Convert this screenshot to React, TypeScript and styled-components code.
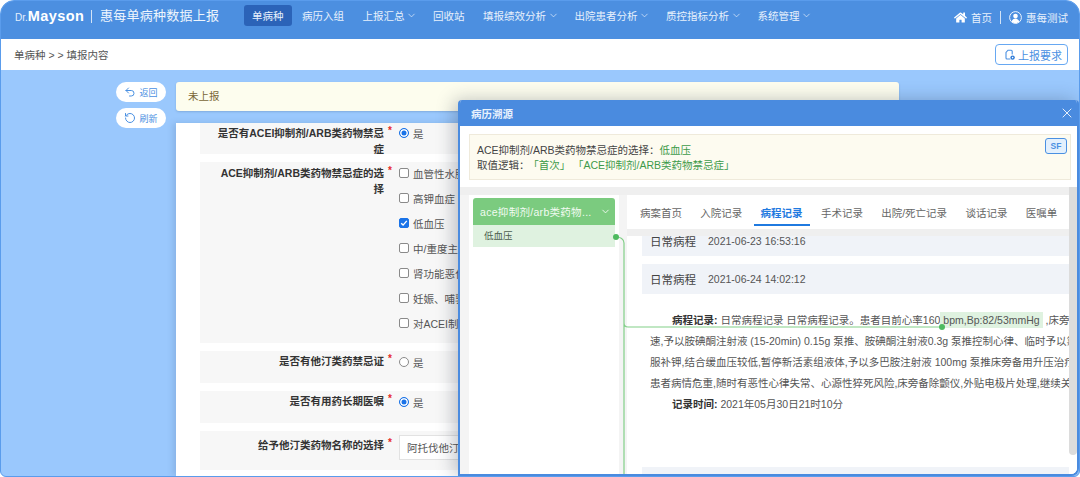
import styled, { createGlobalStyle } from "styled-components";
import { ChevronDown, RotateCcw, Undo2, X } from "lucide-react";
import { FaHome } from "react-icons/fa";

const sans = `"Liberation Sans", "Noto Sans CJK SC", sans-serif`;

const GlobalStyle = createGlobalStyle`
  html, body {
    margin: 0;
    padding: 0;
    background: #fff;
  }
  * {
    box-sizing: border-box;
  }
  body {
    font-family: ${sans};
    color: #333;
  }
`;

const Frame = styled.div`
  position: relative;
  display: flex;
  flex-direction: column;
  width: 1080px;
  height: 477px;
  overflow: hidden;
  border: 1px solid #5a9cec;
  border-radius: 14px 14px 6px 6px;
  background: #9ac8fd;
`;

const TopBar = styled.header`
  display: flex;
  align-items: flex-start;
  height: 38px;
  flex: none;
  padding: 4px 11px 0 14px;
  background: #4c8fe0;
  color: #fff;
`;

const Logo = styled.div`
  display: flex;
  align-items: baseline;
  height: 22px;
  line-height: 22px;
  width: 76px;
  font-size: 10px;
  font-weight: 300;
  color: #e6f0fc;
`;

const LogoName = styled.span`
  font-size: 14.5px;
  font-weight: 700;
  letter-spacing: 0.4px;
  color: #fff;
`;

const Divider = styled.span<{ $h: number }>`
  flex: none;
  width: 1px;
  height: ${(p) => p.$h}px;
  background: rgba(255, 255, 255, 0.75);
`;

const TitleDivider = styled(Divider)`
  margin: 5px 8px 0 0;
`;

const AppTitle = styled.div`
  width: 120px;
  line-height: 22px;
  font-size: 13px;
  letter-spacing: 0.25px;
  color: #eef5fd;
  white-space: nowrap;
`;

const Nav = styled.nav`
  display: flex;
  gap: 2.5px;
  margin-left: 24px;
`;

const NavItem = styled.div<{ $active?: boolean }>`
  display: flex;
  align-items: center;
  height: 21px;
  padding: 0 8px;
  border-radius: 3px;
  font-size: 10.5px;
  white-space: nowrap;
  color: #e8f1fc;
  background: ${(p) => (p.$active ? "#2b63b8" : "transparent")};
`;

const NavChevron = styled(ChevronDown)`
  width: 11px;
  height: 11px;
  margin-left: 1.5px;
  margin-right: -2.5px;
  stroke-width: 1.5;
`;

const TopRight = styled.div`
  display: flex;
  align-items: center;
  height: 24px;
  margin-left: auto;
  font-size: 10.5px;
  color: #e8f1fc;
`;

const TopRightLink = styled.span`
  display: flex;
  align-items: center;
  gap: 4px;
  white-space: nowrap;
`;

const TopDivider = styled(Divider)`
  margin: 0 8px;
`;

const Breadcrumb = styled.div`
  display: flex;
  align-items: center;
  justify-content: space-between;
  flex: none;
  height: 31px;
  padding: 0 11px 0 13px;
  background: #fff;
  font-size: 10.5px;
  color: #555;
`;

const RequireButton = styled.div`
  display: flex;
  align-items: center;
  gap: 2px;
  width: 73px;
  height: 21px;
  padding-left: 8px;
  border: 1px solid #67a8f2;
  border-radius: 4px;
  font-size: 11px;
  color: #4a90e2;
  white-space: nowrap;
`;

const Content = styled.main`
  display: flex;
  flex: 1;
  min-height: 0;
  padding: 12px 0 0 115px;
`;

const SideActions = styled.div`
  display: flex;
  flex-direction: column;
  gap: 6px;
  width: 60px;
  flex: none;
`;

const PillButton = styled.div`
  display: flex;
  align-items: center;
  justify-content: center;
  gap: 3px;
  width: 50px;
  height: 20px;
  border-radius: 10px;
  background: #fff;
  font-size: 9px;
  color: #4a90e2;
`;

const MainColumn = styled.div`
  display: flex;
  flex-direction: column;
  width: 723px;
  min-height: 0;
`;

const StatusBar = styled.div`
  flex: none;
  height: 29px;
  margin-bottom: 12px;
  padding: 0 12px;
  line-height: 28px;
  border-radius: 3px;
  background: #fdfdee;
  box-shadow: 0 1px 2px rgba(60, 90, 130, 0.25);
  font-size: 10.5px;
  color: #7a6636;
`;

const FormPanel = styled.section`
  display: flex;
  flex-direction: column;
  gap: 8px;
  flex: 1;
  padding-left: 24px;
  padding-right: 9px;
  background: #fff;
  box-shadow: -3px 0 6px rgba(60, 90, 130, 0.18);
`;

const FormRow = styled.div<{ $h: number }>`
  display: flex;
  flex: none;
  height: ${(p) => p.$h}px;
  background: #f7f7f7;
`;

const FieldLabel = styled.div<{ $top: number }>`
  flex: none;
  width: 184px;
  padding: ${(p) => p.$top}px 0 0 12px;
  text-align: right;
  font-size: 10.5px;
  font-weight: 700;
  line-height: 15.5px;
  color: #333;
`;

const Required = styled.span<{ $top: number }>`
  flex: none;
  width: 15px;
  padding: ${(p) => p.$top}px 0 0 4px;
  font-size: 10px;
  font-weight: 700;
  line-height: 12px;
  color: #e62a2a;
`;

const OptionList = styled.div<{ $top: number }>`
  display: flex;
  flex-direction: column;
  gap: 9px;
  padding-top: ${(p) => p.$top}px;
`;

const Option = styled.div`
  display: flex;
  align-items: center;
  gap: 4px;
  height: 16px;
  font-size: 10.5px;
  color: #555;
  white-space: nowrap;
`;

const RadioMark = styled.span<{ $on?: boolean }>`
  flex: none;
  width: 10px;
  height: 10px;
  border-radius: 50%;
  background: #fff;
  border: 1px solid ${(p) => (p.$on ? "#1a73e8" : "#8a8a8a")};
  box-shadow: ${(p) => (p.$on ? "inset 0 0 0 1.5px #fff" : "none")};
  background-color: ${(p) => (p.$on ? "#1a73e8" : "#fff")};
`;

const CheckMark = styled.span<{ $on?: boolean }>`
  display: flex;
  align-items: center;
  justify-content: center;
  flex: none;
  width: 10px;
  height: 10px;
  border-radius: 2px;
  border: 1px solid ${(p) => (p.$on ? "#1a73e8" : "#8a8a8a")};
  background: ${(p) => (p.$on ? "#1a73e8" : "#fff")};
`;

const SelectBox = styled.div`
  width: 200px;
  height: 25px;
  margin-top: 4px;
  padding-left: 7px;
  line-height: 24px;
  border: 1px solid #e2e2e2;
  background: #fff;
  font-size: 10.5px;
  color: #555;
  white-space: nowrap;
`;

const Modal = styled.aside`
  position: absolute;
  top: 99px;
  left: 457px;
  right: 0;
  bottom: 0;
  display: flex;
  flex-direction: column;
  border: 2px solid #4a8bdf;
  border-top: 0;
  border-radius: 4px 4px 8px 0;
  background: #fff;
  box-shadow: -4px 0 18px rgba(30, 40, 60, 0.28);
  overflow: hidden;
`;

const ModalHeader = styled.div`
  display: flex;
  align-items: center;
  justify-content: space-between;
  flex: none;
  height: 26px;
  margin: 0 -2px;
  padding: 0 4px 0 13px;
  background: #4a8bdf;
  font-size: 10.5px;
  font-weight: 700;
  color: #e9f2fd;
`;

const Notice = styled.div`
  position: relative;
  flex: none;
  height: 46px;
  margin: 8px 6px 7px 9px;
  padding: 8px 8px 0 7px;
  border: 1px solid #efeadb;
  background: #fdfbf0;
  font-size: 10.5px;
  line-height: 15px;
  color: #444;
  white-space: nowrap;
`;

const NoticeValue = styled.span<{ $left?: number }>`
  margin-left: ${(p) => p.$left ?? 0}px;
  color: #3d9a4a;
`;

const SfBadge = styled.span`
  position: absolute;
  top: 3px;
  right: 3px;
  width: 22px;
  height: 16px;
  border: 1px solid #4a90e2;
  border-radius: 3px;
  background: #e3f0fd;
  font-size: 8.5px;
  font-weight: 700;
  line-height: 14px;
  text-align: center;
  color: #4a90e2;
`;

const Panes = styled.div`
  position: relative;
  display: flex;
  flex: 1;
  min-height: 0;
  border-top: 8px solid #efefef;
  background: #f4f4f4;
`;

const SourcePane = styled.div`
  flex: none;
  width: 150px;
  margin: 0 8px 0 9px;
  padding: 3px 4px 0;
  background: #fff;
`;

const SourceHead = styled.div`
  display: flex;
  align-items: center;
  justify-content: space-between;
  height: 27px;
  padding: 0 4px 0 7px;
  border-radius: 3px 3px 0 0;
  background: #7bcb7f;
  font-size: 10.5px;
  letter-spacing: 0.3px;
  color: #f2fbf2;
  white-space: nowrap;
`;

const SourceItem = styled.div`
  height: 22px;
  padding-left: 11px;
  line-height: 22px;
  background: #dff2e0;
  font-size: 9.5px;
  color: #4c5d4e;
`;

const RecordPane = styled.div`
  display: flex;
  flex-direction: column;
  flex: 1;
  min-width: 0;
  background: #fff;
`;

const Tabs = styled.div`
  display: flex;
  gap: 4.3px;
  flex: none;
  height: 34px;
  margin-right: 8px;
  padding-left: 6px;
  background: #fff;
`;

const Tab = styled.div<{ $active?: boolean }>`
  height: 31px;
  padding: 0 7px;
  line-height: 36px;
  border-bottom: 2px solid ${(p) => (p.$active ? "#1f7ae0" : "transparent")};
  font-size: 10.5px;
  font-weight: ${(p) => (p.$active ? 700 : 400)};
  color: ${(p) => (p.$active ? "#1f7ae0" : "#666")};
  white-space: nowrap;
`;

const RecordScroll = styled.div`
  flex: 1;
  min-height: 0;
  margin-right: 8px;
  padding-left: 15px;
  border-top: 7px solid #efefef;
  overflow: hidden;
`;

const RecordList = styled.div`
  margin-top: -10px;
`;

const RecordHead = styled.div<{ $gap?: boolean }>`
  display: flex;
  align-items: center;
  gap: 12px;
  height: 30px;
  margin-top: ${(p) => (p.$gap ? 8 : 0)}px;
  padding-left: 8px;
  background: #f0f3f8;
`;

const RecordName = styled.span`
  font-size: 11.5px;
  color: #444;
`;

const RecordTime = styled.span`
  font-size: 10.5px;
  color: #555;
`;

const RecordBody = styled.div`
  height: 173px;
  padding: 15.5px 0 0 8px;
  font-size: 10.5px;
  line-height: 21px;
  color: #555;
  white-space: nowrap;
`;

const IndentLine = styled.div`
  padding-left: 22px;
`;

const Strong = styled.b`
  color: #333;
`;

const Highlight = styled.mark`
  padding: 2px 3px;
  background: #dff2e0;
  color: #555;
`;

const Scrollbar = styled.div`
  position: absolute;
  top: -8px;
  right: 0;
  width: 8px;
  height: 268px;
  border-radius: 0 0 4px 4px;
  background: #dcdcdc;
`;

const LinkLines = styled.svg`
  position: absolute;
  top: -8px;
  left: 0;
  pointer-events: none;
`;

const navItems = [
  { label: "单病种", active: true },
  { label: "病历入组" },
  { label: "上报汇总", menu: true },
  { label: "回收站" },
  { label: "填报绩效分析", menu: true },
  { label: "出院患者分析", menu: true },
  { label: "质控指标分析", menu: true },
  { label: "系统管理", menu: true },
];

const contraOptions = [
  "血管性水肿",
  "高钾血症",
  "低血压",
  "中/重度主动脉瓣狭窄",
  "肾功能恶化",
  "妊娠、哺乳期",
  "对ACEI制剂过敏",
];

const tabs = ["病案首页", "入院记录", "病程记录", "手术记录", "出院/死亡记录", "谈话记录", "医嘱单"];

const UserIcon = () => (
  <svg width="13" height="13" viewBox="0 0 13 13" fill="none">
    <circle cx="6.5" cy="6.5" r="5.9" stroke="#fff" strokeWidth="0.9" />
    <circle cx="6.5" cy="5" r="2.3" fill="#fff" />
    <path d="M2.6 10.6c.7-2 2.2-3 3.9-3s3.2 1 3.9 3a5.5 5.5 0 0 1-7.8 0z" fill="#fff" />
  </svg>
);

const RequireIcon = () => (
  <svg width="12" height="13" viewBox="0 0 12 13" fill="none">
    <path
      d="M6 11H3a1 1 0 0 1-1-1V4.5L4 2.2h3.2a1 1 0 0 1 1 1V6"
      stroke="#4a90e2"
      strokeWidth="1.1"
      strokeLinecap="round"
    />
    <circle cx="8.6" cy="9.6" r="2.2" fill="#2f7bd8" />
    <circle cx="8.6" cy="9.6" r="0.8" fill="#fff" />
  </svg>
);

const CheckGlyph = () => (
  <svg width="8" height="8" viewBox="0 0 8 8" fill="none">
    <path d="M1.2 4.2l1.9 1.9 3.7-4.2" stroke="#fff" strokeWidth="1.4" />
  </svg>
);

export default function App() {
  return (
    <>
      <GlobalStyle />
      <Frame>
        <TopBar>
          <Logo>
            Dr.<LogoName>Mayson</LogoName>
          </Logo>
          <TitleDivider $h={13} />
          <AppTitle>惠每单病种数据上报</AppTitle>
          <Nav>
            {navItems.map((item) => (
              <NavItem key={item.label} $active={item.active}>
                {item.label}
                {item.menu && <NavChevron />}
              </NavItem>
            ))}
          </Nav>
          <TopRight>
            <TopRightLink>
              <FaHome size={13} color="#fff" />
              首页
            </TopRightLink>
            <TopDivider $h={13} />
            <TopRightLink>
              <UserIcon />
              惠每测试
            </TopRightLink>
          </TopRight>
        </TopBar>

        <Breadcrumb>
          <span>单病种 &gt; &gt; 填报内容</span>
          <RequireButton>
            <RequireIcon />
            上报要求
          </RequireButton>
        </Breadcrumb>

        <Content>
          <SideActions>
            <PillButton>
              <Undo2 size={12} />
              返回
            </PillButton>
            <PillButton>
              <RotateCcw size={12} />
              刷新
            </PillButton>
          </SideActions>
          <MainColumn>
            <StatusBar>未上报</StatusBar>
            <FormPanel>
              <FormRow $h={31}>
                <FieldLabel $top={3}>是否有ACEI抑制剂/ARB类药物禁忌症</FieldLabel>
                <Required $top={2}>*</Required>
                <OptionList $top={2}>
                  <Option>
                    <RadioMark $on />是
                  </Option>
                </OptionList>
              </FormRow>
              <FormRow $h={181}>
                <FieldLabel $top={4}>ACE抑制剂/ARB类药物禁忌症的选择</FieldLabel>
                <Required $top={3}>*</Required>
                <OptionList $top={3}>
                  {contraOptions.map((label) => (
                    <Option key={label}>
                      <CheckMark $on={label === "低血压"}>
                        {label === "低血压" && <CheckGlyph />}
                      </CheckMark>
                      {label}
                    </Option>
                  ))}
                </OptionList>
              </FormRow>
              <FormRow $h={32}>
                <FieldLabel $top={3}>是否有他汀类药禁忌证</FieldLabel>
                <Required $top={2}>*</Required>
                <OptionList $top={3}>
                  <Option>
                    <RadioMark />是
                  </Option>
                </OptionList>
              </FormRow>
              <FormRow $h={32}>
                <FieldLabel $top={3}>是否有用药长期医嘱</FieldLabel>
                <Required $top={2}>*</Required>
                <OptionList $top={3}>
                  <Option>
                    <RadioMark $on />是
                  </Option>
                </OptionList>
              </FormRow>
              <FormRow $h={39}>
                <FieldLabel $top={7}>给予他汀类药物名称的选择</FieldLabel>
                <Required $top={6}>*</Required>
                <SelectBox>阿托伐他汀</SelectBox>
              </FormRow>
            </FormPanel>
          </MainColumn>
        </Content>

        <Modal>
          <ModalHeader>
            病历溯源
            <X size={16} strokeWidth={1.3} color="#fff" />
          </ModalHeader>
          <Notice>
            <div>
              ACE抑制剂/ARB类药物禁忌症的选择：<NoticeValue>低血压</NoticeValue>
            </div>
            <div>
              取值逻辑：<NoticeValue $left={4}>「首次」</NoticeValue>
              <NoticeValue $left={8}>「ACE抑制剂/ARB类药物禁忌症」</NoticeValue>
            </div>
            <SfBadge>SF</SfBadge>
          </Notice>
          <Panes>
            <SourcePane>
              <SourceHead>
                ace抑制剂/arb类药物...
                <ChevronDown size={11} />
              </SourceHead>
              <SourceItem>低血压</SourceItem>
            </SourcePane>
            <RecordPane>
              <Tabs>
                {tabs.map((tab) => (
                  <Tab key={tab} $active={tab === "病程记录"}>
                    {tab}
                  </Tab>
                ))}
              </Tabs>
              <RecordScroll>
                <RecordList>
                  <RecordHead>
                    <RecordName>日常病程</RecordName>
                    <RecordTime>2021-06-23 16:53:16</RecordTime>
                  </RecordHead>
                  <RecordHead $gap>
                    <RecordName>日常病程</RecordName>
                    <RecordTime>2021-06-24 14:02:12</RecordTime>
                  </RecordHead>
                  <RecordBody>
                    <IndentLine>
                      <Strong>病程记录:</Strong> 日常病程记录 日常病程记录。患者目前心率160
                      <Highlight>bpm,Bp:82/53mmHg</Highlight> ,床旁心电监护示室速
                    </IndentLine>
                    <div>速,予以胺碘酮注射液 (15-20min) 0.15g 泵推、胺碘酮注射液0.3g 泵推控制心律、临时予以氯化钾</div>
                    <div>服补钾,结合缓血压较低,暂停新活素组液体,予以多巴胺注射液 100mg 泵推床旁备用升压治疗,告知</div>
                    <div>患者病情危重,随时有恶性心律失常、心源性猝死风险,床旁备除颤仪,外贴电极片处理,继续关注病情</div>
                    <IndentLine>
                      <Strong>记录时间:</Strong> 2021年05月30日21时10分
                    </IndentLine>
                  </RecordBody>
                  <RecordHead />
                </RecordList>
              </RecordScroll>
            </RecordPane>
            <LinkLines width="490" height="300" viewBox="0 0 490 300" fill="none">
              <path
                d="M156 50h1c3 0 7 2 7 6v244M164 136c0 3 1 4 4 4h314"
                stroke="#82cf88"
                strokeWidth="1.2"
              />
              <circle cx="156" cy="50" r="3" fill="#4dbb5f" />
              <circle cx="482" cy="140" r="3" fill="#4dbb5f" />
            </LinkLines>
            <Scrollbar />
          </Panes>
        </Modal>
      </Frame>
    </>
  );
}
